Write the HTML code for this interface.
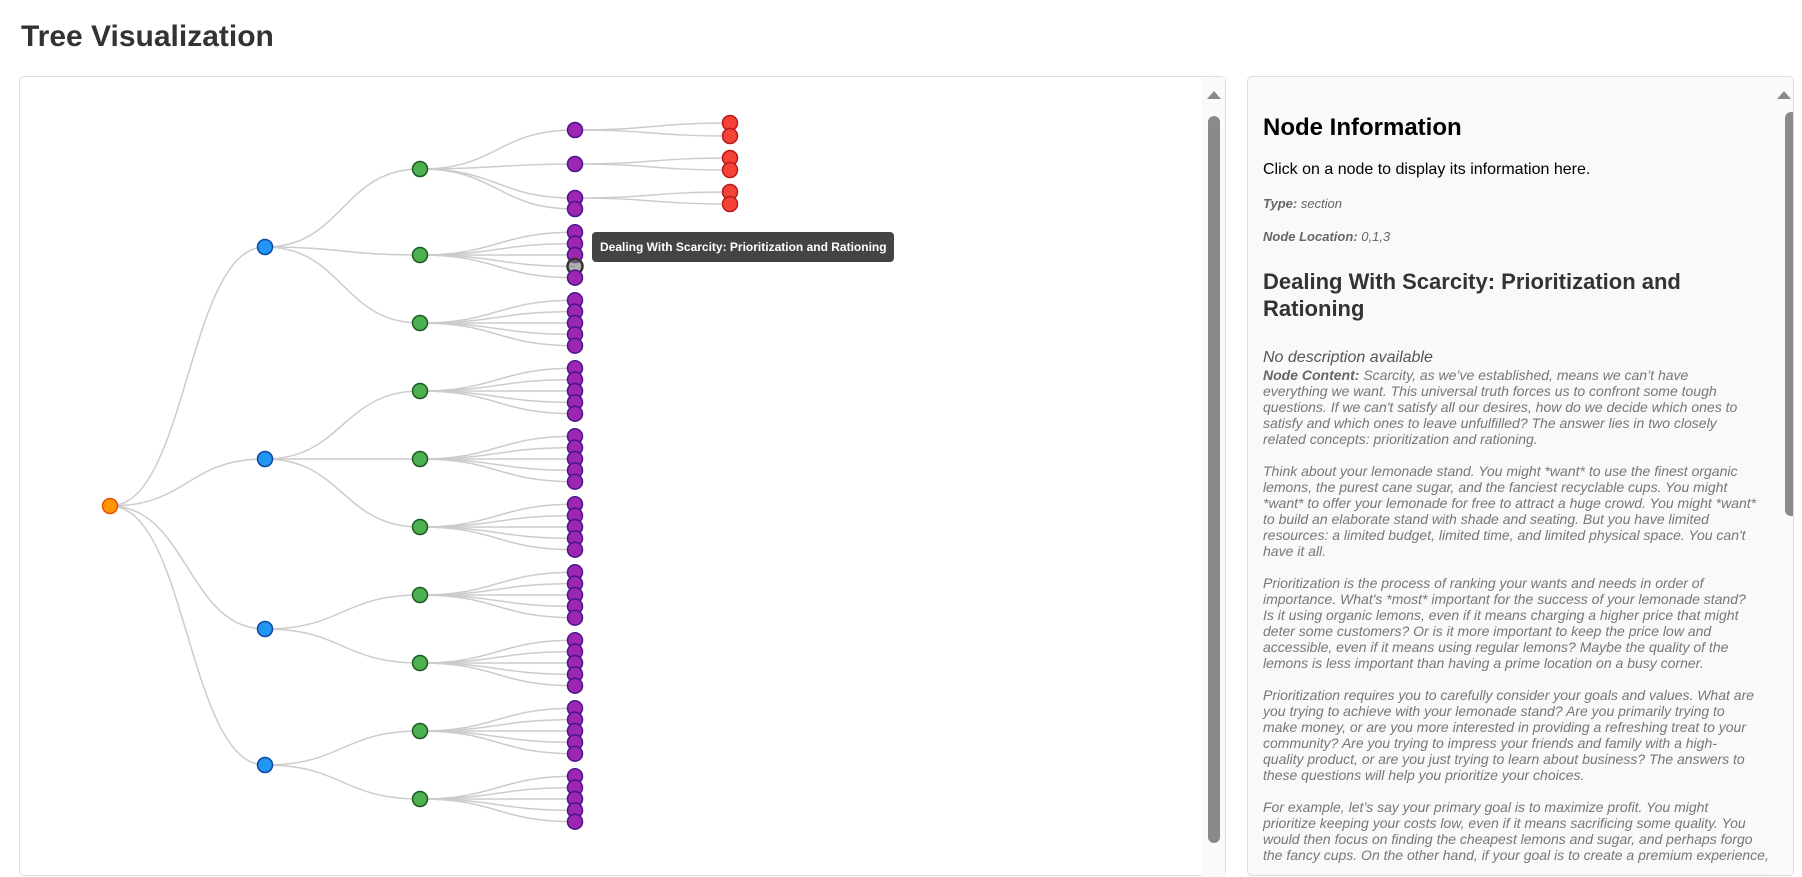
<!DOCTYPE html>
<html><head><meta charset="utf-8"><style>
*{box-sizing:border-box;margin:0;padding:0}
body{width:1802px;height:855px;overflow:hidden;background:#fff;font-family:"Liberation Sans",Arial,sans-serif;position:relative}
h1{position:absolute;left:21px;top:20px;font-size:30px;font-weight:bold;color:#333}
#left{position:absolute;left:19px;top:76px;width:1207px;height:800px;border:1px solid #ddd;border-radius:5px;background:#fff}
#right{position:absolute;left:1247px;top:76px;width:547px;height:800px;border:1px solid #ddd;border-radius:5px;background:#f9f9f9;overflow:hidden}
.sb{position:absolute;width:23px;background:#fafafa}
.thumb{position:absolute;width:12px;background:#8a8a8a;border-radius:6px}
.arr{position:absolute;width:0;height:0;border-left:7px solid transparent;border-right:7px solid transparent;border-bottom:8px solid #8a8a8a}
#info{position:absolute;left:15px;top:37px;width:520px;color:#333}
#info h2{font-size:24px;color:#000;font-weight:bold;line-height:28px}
.click{font-size:16px;color:#000;margin-top:19px;line-height:18px}
.meta{font-size:13px;color:#666;font-style:italic;margin-top:17px;line-height:16px}
#info h3{font-size:22px;font-weight:bold;line-height:27px;margin-top:23px;color:#333}
.nd{font-size:16px;font-style:italic;color:#555;margin-top:27px;line-height:18px}
.content{font-size:14px;font-style:italic;color:#777;line-height:16px;white-space:nowrap;margin-top:0}
.content b{color:#666}
#tip{position:absolute;left:592px;top:232px;width:302px;height:30px;background:#444;border-radius:4px;color:#fff;font-size:12px;font-weight:bold;line-height:30px;padding-left:8px;white-space:nowrap}
</style></head><body>
<h1>Tree Visualization</h1>
<div id="left">
<div class="sb" style="left:1182px;top:0;height:800px"></div>
<div class="arr" style="left:1187px;top:14px"></div>
<div class="thumb" style="left:1188px;top:39px;height:727px"></div>
</div>
<svg id="tree" width="1802" height="855" style="position:absolute;left:0;top:0"></svg>
<div id="tip">Dealing With Scarcity: Prioritization and Rationing</div>
<div id="right">
<div class="sb" style="left:523px;top:0;height:800px"></div>
<div class="arr" style="left:529px;top:14px"></div>
<div class="thumb" style="left:537px;top:35px;height:404px"></div>
<div id="info">
<h2>Node Information</h2>
<p class="click">Click on a node to display its information here.</p>
<p class="meta"><b>Type:</b> section</p>
<p class="meta"><b>Node Location:</b> 0,1,3</p>
<h3>Dealing With Scarcity: Prioritization and<br>Rationing</h3>
<p class="nd">No description available</p>
<div class="content"><b>Node Content:</b> Scarcity, as we’ve established, means we can’t have<br>everything we want. This universal truth forces us to confront some tough<br>questions. If we can't satisfy all our desires, how do we decide which ones to<br>satisfy and which ones to leave unfulfilled? The answer lies in two closely<br>related concepts: prioritization and rationing.<br><br>Think about your lemonade stand. You might *want* to use the finest organic<br>lemons, the purest cane sugar, and the fanciest recyclable cups. You might<br>*want* to offer your lemonade for free to attract a huge crowd. You might *want*<br>to build an elaborate stand with shade and seating. But you have limited<br>resources: a limited budget, limited time, and limited physical space. You can't<br>have it all.<br><br>Prioritization is the process of ranking your wants and needs in order of<br>importance. What's *most* important for the success of your lemonade stand?<br>Is it using organic lemons, even if it means charging a higher price that might<br>deter some customers? Or is it more important to keep the price low and<br>accessible, even if it means using regular lemons? Maybe the quality of the<br>lemons is less important than having a prime location on a busy corner.<br><br>Prioritization requires you to carefully consider your goals and values. What are<br>you trying to achieve with your lemonade stand? Are you primarily trying to<br>make money, or are you more interested in providing a refreshing treat to your<br>community? Are you trying to impress your friends and family with a high-<br>quality product, or are you just trying to learn about business? The answers to<br>these questions will help you prioritize your choices.<br><br>For example, let’s say your primary goal is to maximize profit. You might<br>prioritize keeping your costs low, even if it means sacrificing some quality. You<br>would then focus on finding the cheapest lemons and sugar, and perhaps forgo<br>the fancy cups. On the other hand, if your goal is to create a premium experience,</div>
</div>
</div>
<script>
var svg=document.getElementById('tree'),links=[],nodes=[];
var C={o:['#ff9800','#e65100'],b:['#2196f3','#0d47a1'],g:['#4caf50','#1b5e20'],p:['#9c27b0','#4a148c'],r:['#f44336','#b71c1c'],h:['rgba(120,120,120,0.6)','#333']};
var X={o:110,b:265,g:420,p:575,r:730};
function L(x0,y0,x1,y1){links.push([x0,y0,x1,y1]);}
nodes.push([X.o,506,'o']);
var blues=[[247,[169,255,323]],[459,[391,459,527]],[629,[595,663]],[765,[731,799]]];
var s=11.35;
blues.forEach(function(b){
 L(X.o,506,X.b,b[0]);
 b[1].forEach(function(g){
  L(X.b,b[0],X.g,g);
  var ps=(g===169)?[130,164,198,209]:[g-2*s,g-s,g,g+s,g+2*s];
  ps.forEach(function(p,i){
   L(X.g,g,X.p,p);
   var t=(g===255&&i===3)?'h':'p';
   nodes.push([X.p,p,t]);
  });
  if(g===169){[[130,[123,136]],[164,[158,170]],[198,[192,204]]].forEach(function(q){q[1].forEach(function(r){L(X.p,q[0],X.r,r);nodes.push([X.r,r,'r']);});});}
  nodes.push([X.g,g,'g']);
 });
 nodes.push([X.b,b[0],'b']);
});
var h='';
links.forEach(function(l){var m=(l[0]+l[2])/2;h+='<path d="M'+l[0]+','+l[1]+'C'+m+','+l[1]+' '+m+','+l[3]+' '+l[2]+','+l[3]+'" fill="none" stroke="#ccc" stroke-width="1.5"/>';});
nodes.forEach(function(n){h+='<circle cx="'+n[0]+'" cy="'+n[1]+'" r="7.5" fill="'+C[n[2]][0]+'" stroke="'+C[n[2]][1]+'" stroke-width="'+(n[2]==='h'?2.5:1.5)+'"/>';});
svg.innerHTML=h;
</script>
</body></html>
